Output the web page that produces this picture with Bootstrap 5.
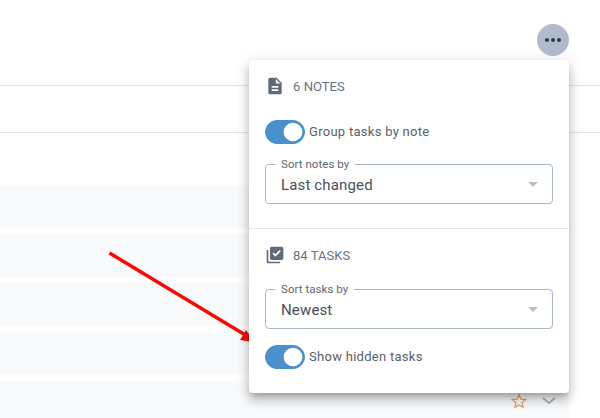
<!DOCTYPE html>
<html lang="en">
<head>
<meta charset="utf-8">
<title>Notes menu</title>
<link rel="stylesheet" href="https://cdn.jsdelivr.net/npm/bootstrap@5.3.0/dist/css/bootstrap.min.css">
<style>
html,body{height:418px;overflow:hidden;background:#fff;font-family:Roboto,sans-serif}
.page-shell{position:relative;height:418px;overflow:hidden}
.head-bar{height:86px;border-bottom:1px solid #e3e5ec;padding:24px 31px 0 0}
.more-btn{width:32px;height:32px;border-radius:50%;background:#b0bccd;border:0;padding:0}
.sub-bar{height:47px;border-bottom:1px solid #e3e5ec}
.row-stack{margin:52px 31px 0 0;gap:6px}
.task-row{height:43px;flex:none;background:#f8fafc;padding:0 13px 3px 0;gap:15px}
.menu-panel{position:absolute;left:249px;top:60px;width:320px;height:333px;background:#fff;border-radius:4px;box-shadow:0 5px 5px -3px rgba(0,0,0,.2),0 8px 10px 1px rgba(0,0,0,.14),0 3px 14px 2px rgba(0,0,0,.12)}
.panel-part{padding:16px 16px 0}
.part-one{height:169px;border-bottom:1px solid #e3e5ec}
.part-head{height:20px;gap:8px;color:#687382;font-size:13px;letter-spacing:.05px;line-height:20px}
.part-head span{padding-top:2px}
.part-head svg{flex:none;fill:#5f6b7a}
.switch-row{margin:0;padding:0;min-height:24px;gap:4px}
.form-switch.switch-row .form-check-input,.form-switch.switch-row .form-check-input:checked{width:40px;height:24px;margin:0;float:none;flex:none;background-color:#4a90cc;border-color:#4a90cc;box-shadow:none;background-image:url("data:image/svg+xml,%3Csvg xmlns='http://www.w3.org/2000/svg' viewBox='-4 -4 8 8'%3E%3Ccircle r='3.4' fill='%23fff'/%3E%3C/svg%3E")}
.switch-text{font-size:13px;letter-spacing:.28px;color:#5a5f68;line-height:24px}
.outlined{position:relative;height:40px}
.outlined .form-select{height:40px;padding:1px 32px 0 15px;border:1px solid #a9b5c8;border-radius:4px;color:#4a4f57;font-size:15px;letter-spacing:.15px;line-height:24px;font-family:Roboto,sans-serif;background-image:url("data:image/svg+xml,%3Csvg xmlns='http://www.w3.org/2000/svg' width='10' height='5'%3E%3Cpath d='M0 0h10L5 5z' fill='%23bdbfc4'/%3E%3C/svg%3E");background-position:right 14px top 17px;background-size:10px 5px}
.float-label{position:absolute;left:10px;top:-7px;padding:0 6px;background:#fff;color:#62676f;font-size:11.5px;line-height:14px;letter-spacing:.05px}
.gap-a{margin-top:24px}
.gap-b{margin-top:20px}
.gap-c{margin-top:24px}
.gap-d{margin-top:16px}
.arrow-mark{position:absolute;left:100px;top:245px}
</style>
</head>
<body>
<div class="page-shell">
  <div class="head-bar d-flex justify-content-end align-items-start">
    <button class="more-btn d-flex align-items-center justify-content-center" type="button" aria-label="More">
      <svg width="18" height="6" viewBox="0 0 18 6"><circle cx="3" cy="3" r="2" fill="#2f3a48"/><circle cx="9" cy="3" r="2" fill="#2f3a48"/><circle cx="15" cy="3" r="2" fill="#2f3a48"/></svg>
    </button>
  </div>
  <div class="sub-bar"></div>
  <div class="row-stack d-flex flex-column">
    <div class="task-row"></div>
    <div class="task-row"></div>
    <div class="task-row"></div>
    <div class="task-row"></div>
    <div class="task-row d-flex align-items-center justify-content-end">
      <svg width="16" height="16" viewBox="0 0 24 24"><path d="M12 2.500l2.900 6.600 7.100.7-5.400 4.700 1.600 7-6.200-3.700-6.200 3.700 1.600-7L2 9.800l7.100-.7z" fill="none" stroke="#e8a050" stroke-width="1.800"/></svg>
      <svg width="14" height="8" viewBox="0 0 14 8"><path d="M1 1l6 5 6-5" fill="none" stroke="#a9b5c6" stroke-width="2"/></svg>
    </div>
  </div>

  <svg class="arrow-mark" width="160" height="102" viewBox="0 0 160 102">
    <path d="M9.500 8L147 91" stroke="#fa0808" stroke-width="3.500" fill="none"/>
    <path d="M155 97.500L140 95L146 85z" fill="#fa0808"/>
  </svg>

  <div class="menu-panel">
    <div class="panel-part part-one">
      <div class="part-head d-flex align-items-center">
        <svg width="20" height="20" viewBox="0 0 24 24"><path d="M14 2H6c-1.100 0-1.990.9-1.990 2L4 20c0 1.100.89 2 1.990 2H18c1.100 0 2-.9 2-2V8l-6-6zm2 16H8v-2h8v2zm0-4H8v-2h8v2zm-3-5V3.500L18.500 9H13z"/></svg>
        <span>6 NOTES</span>
      </div>
      <div class="form-check form-switch switch-row d-flex align-items-center gap-a">
        <input class="form-check-input" type="checkbox" role="switch" id="groupBy" checked>
        <label class="switch-text" for="groupBy">Group tasks by note</label>
      </div>
      <div class="outlined gap-b">
        <select class="form-select" id="sortNotes"><option>Last changed</option></select>
        <label class="float-label" for="sortNotes">Sort notes by</label>
      </div>
    </div>
    <div class="panel-part">
      <div class="part-head d-flex align-items-center">
        <svg width="20" height="20" viewBox="0 0 24 24"><path d="M20 2H8c-1.100 0-2 .9-2 2v12c0 1.100.9 2 2 2h12c1.100 0 2-.9 2-2V4c0-1.100-.9-2-2-2zm-7.530 12L9 10.500l1.410-1.410 2.060 2.060 5.180-5.180 1.410 1.410L12.470 14zM4 20h14v2H4c-1.100 0-2-.9-2-2V6h2v14z"/></svg>
        <span>84 TASKS</span>
      </div>
      <div class="outlined gap-c">
        <select class="form-select" id="sortTasks"><option>Newest</option></select>
        <label class="float-label" for="sortTasks">Sort tasks by</label>
      </div>
      <div class="form-check form-switch switch-row d-flex align-items-center gap-d">
        <input class="form-check-input" type="checkbox" role="switch" id="showHidden" checked>
        <label class="switch-text" for="showHidden">Show hidden tasks</label>
      </div>
    </div>
  </div>
</div>
<script src="https://cdn.jsdelivr.net/npm/bootstrap@5.3.0/dist/js/bootstrap.bundle.min.js"></script>
</body>
</html>
